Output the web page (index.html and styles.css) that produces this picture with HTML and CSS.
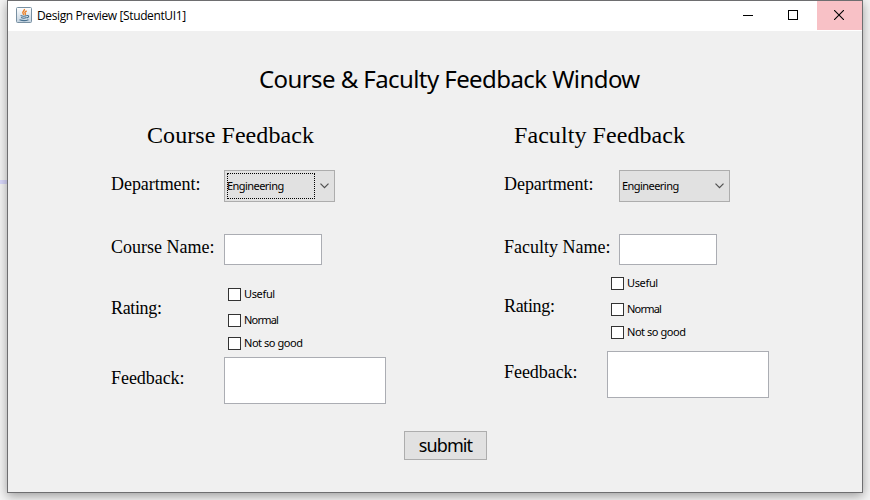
FILE: index.html
```html
<!DOCTYPE html>
<html lang="en">
<head>
<meta charset="utf-8">
<title>Design Preview [StudentUI1]</title>
<link rel="stylesheet" href="styles.css">
</head>
<body>
<div class="accent"></div>
<main class="window">
  <header class="titlebar">
    <svg class="java" width="16" height="16" viewBox="0 0 16 16">
      <defs><linearGradient id="g" x2="0" y2="1"><stop stop-color="#fff"/><stop offset="1" stop-color="#c3d2df"/></linearGradient></defs>
      <rect x=".5" y=".5" width="15" height="15" rx="1" fill="url(#g)" stroke="#7890a2"/>
      <path d="M8.4 2c.7 1.8-2.9 2.6-1.3 4.7l.8 1.1M10.7 4C8.8 4.8 8.4 5.6 9.3 6.5c.4.5.1 1-.4 1.4" fill="none" stroke="#ed8128" stroke-width="1.4"/>
      <path d="M4.6 8.6c1.6.7 4.6.7 6.2 0M5 10.6c1.5.7 4.1.7 5.5 0M11 8.5c2.4-.4 2 1.9-.2 2.4M3.5 12.8c2.8 1 6.8.9 9-.1" fill="none" stroke="#49718f" stroke-width="1.1"/>
    </svg>
    <span class="caption">Design Preview [StudentUI1]</span>
    <div class="controls">
      <span class="control"><svg width="10" height="10" shape-rendering="crispEdges"><path d="M0 5.5h10" stroke="#000"/></svg></span>
      <span class="control"><svg width="10" height="10"><rect x=".5" y=".5" width="9" height="9" fill="none" stroke="#000"/></svg></span>
      <span class="control close"><svg width="10" height="10"><path d="M0 0l10 10M10 0L0 10" stroke="#000" stroke-width="1.1"/></svg></span>
    </div>
  </header>
  <h1>Course &amp; Faculty Feedback Window</h1>
  <div class="forms">
    <section class="course">
      <h2>Course Feedback</h2>
      <div class="row department"><span class="label">Department:</span>
        <div class="select focused"><span class="value">Engineering</span><svg width="9" height="6"><path d="M.5.7l4 4 4-4" fill="none" stroke="#505050" stroke-width="1.2"/></svg></div></div>
      <div class="row name"><span class="label">Course Name:</span><div class="field"></div></div>
      <div class="row rating"><span class="label">Rating:</span>
        <div class="checks">
          <div class="check"><i></i><span class="useful">Useful</span></div>
          <div class="check"><i></i><span class="normal">Normal</span></div>
          <div class="check"><i></i><span class="bad">Not so good</span></div>
        </div></div>
      <div class="row feedback"><span class="label">Feedback:</span><div class="area"></div></div>
    </section>
    <section class="faculty">
      <h2>Faculty Feedback</h2>
      <div class="row department"><span class="label">Department:</span>
        <div class="select"><span class="value">Engineering</span><svg width="9" height="6"><path d="M.5.7l4 4 4-4" fill="none" stroke="#505050" stroke-width="1.2"/></svg></div></div>
      <div class="row name"><span class="label">Faculty Name:</span><div class="field"></div></div>
      <div class="row rating"><span class="label">Rating:</span>
        <div class="checks">
          <div class="check"><i></i><span class="useful">Useful</span></div>
          <div class="check"><i></i><span class="normal">Normal</span></div>
          <div class="check"><i></i><span class="bad">Not so good</span></div>
        </div></div>
      <div class="row feedback"><span class="label">Feedback:</span><div class="area"></div></div>
    </section>
  </div>
  <div class="submit">submit</div>
</main>
</body>
</html>
```
FILE: styles.css
```css
* { box-sizing: border-box; }
body {
  margin: 0;
  height: 500px;
  overflow: hidden;
  background: #f4f4f4;
  color: #000;
  font-family: "Noto Sans", sans-serif;
}
.accent {
  position: absolute;
  left: 0;
  top: 180px;
  width: 7px;
  height: 4px;
  background: #d9d8fb;
}
.window {
  position: relative;
  width: 856px;
  height: 493px;
  margin-left: 7px;
  border: 1px solid #6e6e70;
  background: #f0f0f0;
  box-shadow: 0 3px 10px rgba(0, 0, 0, .36);
}
.titlebar {
  display: flex;
  height: 30px;
  background: #fff;
}
.java { margin: 6px 5px 0 8px; }
.caption {
  font: 12px/30px "Open Sans", sans-serif;
  letter-spacing: -.38px;
  white-space: nowrap;
}
.controls { display: flex; margin-left: auto; }
.control {
  display: flex;
  width: 45px;
  height: 29px;
  padding: 0 3px 2px 0;
  align-items: center;
  justify-content: center;
}
.control svg { display: block; }
.close { padding-right: 1px; background: #f8c1c6; }
h1 {
  margin: 31px 0 0 251px;
  font-size: 24px;
  font-weight: 400;
  line-height: 34px;
  letter-spacing: -.58px;
  white-space: nowrap;
}
.forms { display: flex; margin-left: 103px; height: 304px; }
section { flex: none; width: 393px; }
.faculty { width: 300px; }
h2 {
  margin: 25px 0 0 36px;
  font: 24px/28px "Liberation Serif", serif;
  letter-spacing: .07px;
  white-space: nowrap;
}
.faculty h2 { margin-left: 10px; }
.row { display: flex; }
.label {
  flex: none;
  width: 113px;
  font: 18px/28px "Liberation Serif", serif;
  letter-spacing: -.05px;
  white-space: nowrap;
}
.department { margin-top: 21px; height: 32px; }
.name { margin-top: 32px; height: 31px; }
.name .label { line-height: 27px; letter-spacing: 0; }
.rating { margin-top: 12px; height: 80px; }
.feedback { height: 47px; }
.faculty .rating { height: 74px; }
.faculty .label { width: 115px; }
.select {
  display: flex;
  width: 111px;
  height: 32px;
  padding: 2px 5px 2px 2px;
  border: 1px solid #adadad;
  background: #e1e1e1;
  align-items: center;
  justify-content: space-between;
}
.value {
  width: 88px;
  height: 26px;
  font-size: 11px;
  line-height: 26px;
  letter-spacing: -.55px;
}
.focused .value { outline: 1px dotted #000; outline-offset: -1px; }
.field, .area {
  width: 98px;
  height: 31px;
  border: 1px solid #abadb3;
  background: #fff;
}
.area { width: 162px; height: 47px; }
.rating .label { padding-top: 17px; letter-spacing: -.35px; }
.faculty .rating .label { width: 107px; padding-top: 15px; }
.feedback .label { padding-top: 7px; }
.faculty .feedback .label { width: 103px; }
.checks { padding: 11px 0 0 4px; }
.faculty .checks { padding: 0; }
.check {
  display: flex;
  height: 13px;
  gap: 3px;
  margin-bottom: 13px;
  font-size: 11px;
  line-height: 11px;
  letter-spacing: -.45px;
  white-space: nowrap;
}
.normal { letter-spacing: -.8px; }
.useful { letter-spacing: -.35px; }
.check:nth-child(2) { margin-bottom: 10px; }
.check i { width: 13px; height: 13px; border: 1px solid #333; background: #fff; }
.submit {
  width: 83px;
  height: 29px;
  margin: 31px 0 0 396px;
  border: 1px solid #adadad;
  background: #e1e1e1;
  font-size: 18px;
  line-height: 27px;
  letter-spacing: -.9px;
  text-align: center;
}
```
